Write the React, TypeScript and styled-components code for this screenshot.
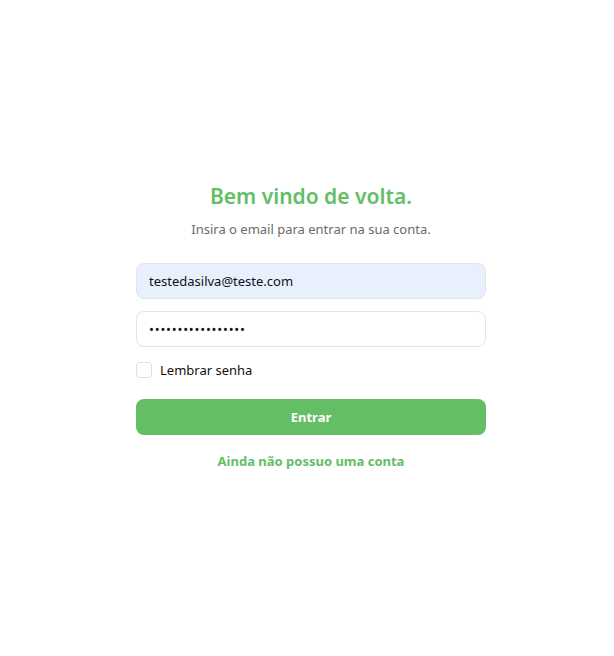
import React from "react";
import styled, { createGlobalStyle } from "styled-components";

const GlobalStyle = createGlobalStyle`
  * { box-sizing: border-box; }
  html, body { margin: 0; padding: 0; background: #ffffff; }
  body { font-family: "Noto Sans", "Segoe UI", sans-serif; }
`;

const Page = styled.main`
  min-height: 656px;
  display: flex;
  align-items: center;
  justify-content: center;
  padding-left: 8px;
  padding-bottom: 3px;
`;

const Form = styled.form`
  width: 350px;
  display: flex;
  flex-direction: column;
`;

const Title = styled.h1`
  margin: 0;
  text-align: center;
  color: #63be66;
  font-size: 21px;
  font-weight: 600;
  line-height: 28px;
`;

const Subtitle = styled.p`
  margin: 9px 0 24px;
  text-align: center;
  color: #6b6b6b;
  font-size: 13px;
  line-height: 20px;
`;

const Input = styled.input<{ $filled?: boolean }>`
  height: 36px;
  width: 100%;
  border: 1px solid #e2e4e8;
  border-radius: 8px;
  padding: 0 12px;
  font-family: inherit;
  font-size: 13px;
  color: #111;
  background: ${(p) => (p.$filled ? "#e8f0fe" : "#ffffff")};
  outline: none;
  margin-bottom: 12px;

  &[type="password"] {
    letter-spacing: 0.8px;
  }
`;

const CheckRow = styled.label`
  display: flex;
  align-items: center;
  gap: 8px;
  font-size: 13px;
  line-height: 20px;
  color: #111;
  margin: 1px 0 19px;
`;

const Box = styled.span`
  width: 16px;
  height: 16px;
  border: 1px solid #dcdfe4;
  border-radius: 4px;
  background: #fff;
`;

const Button = styled.button`
  height: 36px;
  border: none;
  border-radius: 8px;
  background: #63be66;
  color: #fff;
  font-family: inherit;
  font-size: 13px;
  font-weight: 700;
`;

const LinkText = styled.a`
  margin-top: 16px;
  text-align: center;
  color: #63be66;
  font-size: 13px;
  line-height: 20px;
  font-weight: 700;
  text-decoration: none;
`;

export default function App() {
  return (
    <>
      <GlobalStyle />
      <Page>
        <Form onSubmit={(e) => e.preventDefault()}>
          <Title>Bem vindo de volta.</Title>
          <Subtitle>Insira o email para entrar na sua conta.</Subtitle>
          <Input $filled type="email" defaultValue="testedasilva@teste.com" />
          <Input type="password" defaultValue="testedasilva12345" />
          <CheckRow>
            <Box />
            Lembrar senha
          </CheckRow>
          <Button type="submit">Entrar</Button>
          <LinkText href="#">Ainda não possuo uma conta</LinkText>
        </Form>
      </Page>
    </>
  );
}
